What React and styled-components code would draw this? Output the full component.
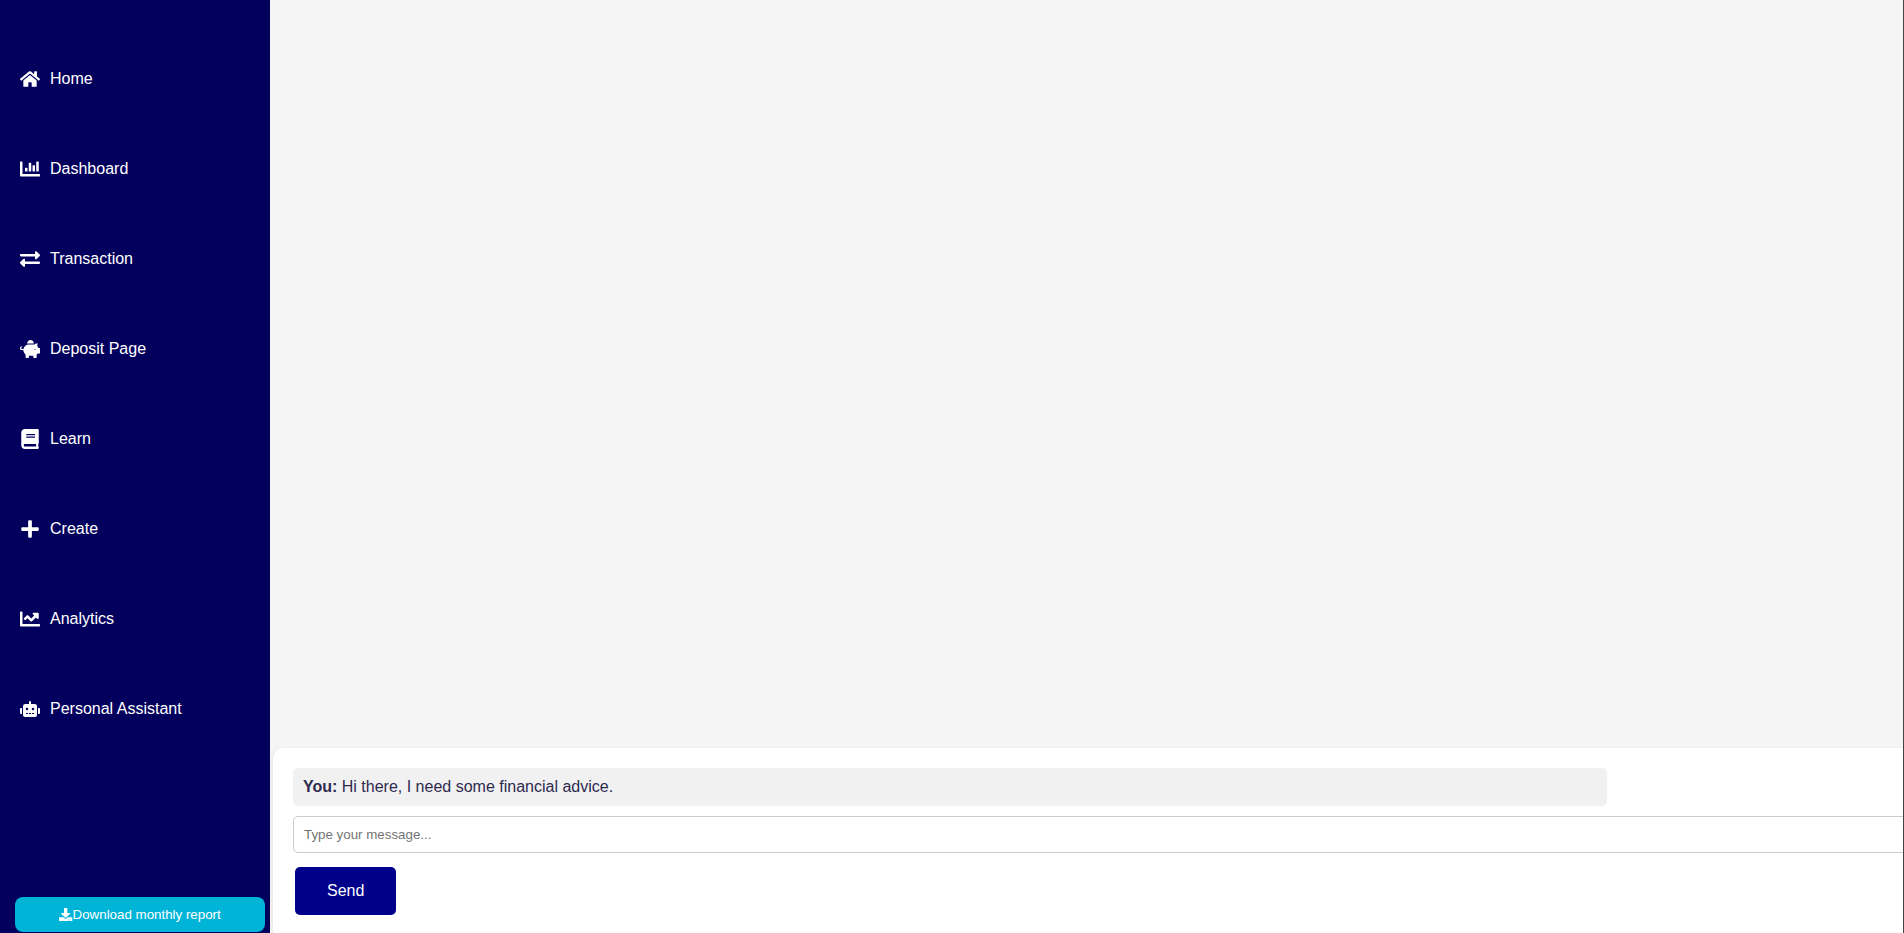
import React, { useState } from "react";
import styled, { createGlobalStyle } from "styled-components";
import {
  FaHome,
  FaChartBar,
  FaExchangeAlt,
  FaPiggyBank,
  FaBook,
  FaPlus,
  FaChartLine,
  FaRobot,
  FaDownload,
} from "react-icons/fa";

const links = [
  { label: "Home", href: "#home", icon: FaHome },
  { label: "Dashboard", href: "#dashboard", icon: FaChartBar },
  { label: "Transaction", href: "#transaction", icon: FaExchangeAlt },
  { label: "Deposit Page", href: "#deposit", icon: FaPiggyBank },
  { label: "Learn", href: "#learn", icon: FaBook },
  { label: "Create", href: "#create", icon: FaPlus },
  { label: "Analytics", href: "#analytics", icon: FaChartLine },
  { label: "Personal Assistant", href: "#assistant", icon: FaRobot },
];

export default function App() {
  const [messages, setMessages] = useState([
    { sender: "You", text: "Hi there, I need some financial advice." },
  ]);
  const [draft, setDraft] = useState("");

  const handleSubmit = (e) => {
    e.preventDefault();
    if (!draft.trim()) return;
    setMessages([...messages, { sender: "You", text: draft }]);
    setDraft("");
  };

  return (
    <>
      <GlobalStyle />
      <Page>
        <Sidebar>
          <NavList>
            {links.map(({ label, href, icon: Icon }) => (
              <li key={label}>
                <NavLink href={href}>
                  <Icon size={20} />
                  {label}
                </NavLink>
              </li>
            ))}
          </NavList>
          <DownloadButton type="button">
            <FaDownload />
            Download monthly report
          </DownloadButton>
        </Sidebar>
        <Main>
          <Chat>
            {messages.map((message, i) => (
              <Message key={i}>
                <strong>{message.sender}:</strong> {message.text}
              </Message>
            ))}
            <ChatForm onSubmit={handleSubmit}>
              <ChatInput
                type="text"
                aria-label="Message"
                placeholder="Type your message..."
                value={draft}
                onChange={(e) => setDraft(e.target.value)}
              />
              <SendButton type="submit">Send</SendButton>
            </ChatForm>
          </Chat>
        </Main>
      </Page>
    </>
  );
}

// Styled Components
const GlobalStyle = createGlobalStyle`
  * {
    box-sizing: border-box;
  }

  body {
    margin: 0;
    background: #f5f5f5;
    color: #2e2a4f;
    font-family: "Liberation Sans", Arial, sans-serif;
    font-size: 16px;
    line-height: 18px;
  }
`;

const Page = styled.div`
  display: flex;
  height: 100vh;
  overflow: hidden;
  border-right: 1px solid #444;
`;

const Sidebar = styled.nav`
  display: flex;
  flex-direction: column;
  justify-content: space-between;
  flex: 0 0 270px;
  padding: 69px 5px 1px 15px;
  background: #02005c;
`;

const NavList = styled.ul`
  display: flex;
  flex-direction: column;
  gap: 70px;
  margin: 0;
  padding: 0 5px;
  list-style: none;
`;

const NavLink = styled.a`
  display: flex;
  align-items: center;
  gap: 10px;
  height: 20px;
  color: #fff;
  text-decoration: none;
`;

const DownloadButton = styled.button`
  display: flex;
  align-items: center;
  justify-content: center;
  height: 35px;
  border: none;
  border-radius: 8px;
  background: #00b4d8;
  color: #fff;
  font-family: inherit;
  cursor: pointer;
`;

const Main = styled.main`
  display: flex;
  flex: 1;
  flex-direction: column;
  justify-content: flex-end;
  min-width: 0;
  padding-left: 3px;
`;

/* The panel runs past the right and bottom edges of the page */
const Chat = styled.section`
  width: calc(100% + 52px);
  margin-bottom: -6px;
  padding: 20px;
  border-radius: 10px;
  background: #fff;
  box-shadow: 0 2px 5px rgba(0, 0, 0, 0.1);
`;

const Message = styled.div`
  width: 80%;
  margin-bottom: 10px;
  padding: 10px;
  border-radius: 5px;
  background: #f1f1f1;
`;

const ChatForm = styled.form`
  display: flex;
  flex-direction: column;
  align-items: flex-start;
  gap: 10px;
`;

const ChatInput = styled.input`
  width: 100%;
  padding: 10px;
  border: 1px solid #ccc;
  border-radius: 5px;
  font-family: inherit;
`;

const SendButton = styled.button`
  margin: 4px 2px;
  padding: 15px 32px;
  border: none;
  border-radius: 5px;
  background: #00008b;
  color: #fff;
  font-family: inherit;
  font-size: 16px;
  cursor: pointer;
`;
